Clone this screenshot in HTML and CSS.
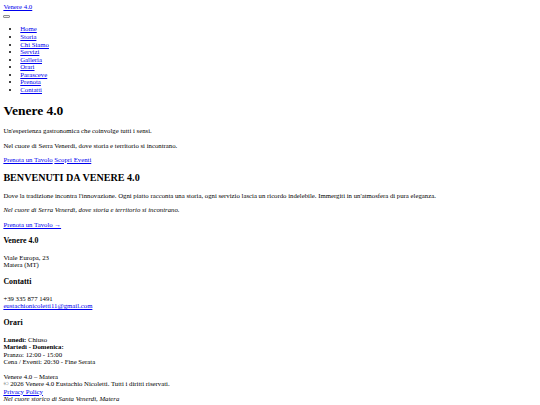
FILE: index.html
```html
<!DOCTYPE html>
<html lang="it">
<head>
<meta charset="utf-8">
<title>Venere 4.0</title>
<link rel="stylesheet" href="styles.css">
</head>
<body class="page">
<header class="site-header">
  <div class="logo-row"><a class="logo" href="#">Venere 4.0</a></div>
  <div class="toggle-row"><button class="menu-toggle" type="button" aria-label="Menu"></button></div>
  <nav class="main-nav">
    <ul class="nav-list">
      <li><a href="#">Home</a></li>
      <li><a href="#">Storia</a></li>
      <li><a href="#">Chi Siamo</a></li>
      <li><a href="#">Servizi</a></li>
      <li><a href="#">Galleria</a></li>
      <li><a href="#">Orari</a></li>
      <li><a href="#">Parasceve</a></li>
      <li><a href="#">Prenota</a></li>
      <li><a href="#">Contatti</a></li>
    </ul>
  </nav>
</header>
<main>
  <section class="hero">
    <h1 class="hero-title">Venere 4.0</h1>
    <p class="txt">Un'esperienza gastronomica che coinvolge tutti i sensi.</p>
    <p class="txt">Nel cuore di Serra Venerdì, dove storia e territorio si incontrano.</p>
    <div class="hero-actions"><a href="#">Prenota un Tavolo</a> <a href="#">Scopri Eventi</a></div>
  </section>
  <section class="welcome">
    <h2 class="welcome-title">BENVENUTI DA VENERE 4.0</h2>
    <p class="txt">Dove la tradizione incontra l'innovazione. Ogni piatto racconta una storia, ogni servizio lascia un ricordo indelebile. Immergiti in un'atmosfera di pura eleganza.</p>
    <p class="txt"><em>Nel cuore di Serra Venerdì, dove storia e territorio si incontrano.</em></p>
    <a href="#">Prenota un Tavolo →</a>
  </section>
</main>
<footer class="site-footer">
  <div class="f-col">
    <h3 class="f-title">Venere 4.0</h3>
    <p class="txt">Viale Europa, 23<br>Matera (MT)</p>
  </div>
  <div class="f-col">
    <h3 class="f-title">Contatti</h3>
    <p class="txt">+39 335 877 1491<br><a href="#">eustachionicoletti11@gmail.com</a></p>
  </div>
  <div class="f-col">
    <h3 class="f-title">Orari</h3>
    <div><strong>Lunedì:</strong> Chiuso</div>
    <div><strong>Martedì - Domenica:</strong></div>
    <div>Pranzo: 12:00 - 15:00</div>
    <div>Cena / Eventi: 20:30 - Fine Serata</div>
  </div>
  <div class="f-bottom">
    <div>Venere 4.0 – Matera</div>
    <div>© 2026 Venere 4.0 Eustachio Nicoletti. Tutti i diritti riservati.</div>
    <div><a href="#">Privacy Policy</a></div>
    <div><em>Nel cuore storico di Santa Venerdì, Matera</em></div>
  </div>
</footer>
</body>
</html>
```
FILE: styles.css
```css
html { background: #fff; }
.page {
  margin: 3.375px;
  font-family: "Liberation Serif", "Times New Roman", serif;
  font-size: 6.75px;
  line-height: 1.125;
  color: #000;
}
a { color: #0000ee; }
.menu-toggle {
  display: inline-block;
  width: 6.75px;
  height: 2.53px;
  padding: 0;
  border: 0.85px solid #8f8f8f;
  border-radius: 1px;
  background: #efefef;
  vertical-align: baseline;
}
.nav-list {
  margin: 1em 0;
  padding-left: 16.875px;
}
.hero-title { font-size: 2em; margin: 0.67em 0; line-height: 1.15; }
.welcome-title { font-size: 1.5em; margin: 0.83em 0; line-height: 1.15; }
.f-title { font-size: 1.17em; margin: 1em 0; line-height: 1.25; }
.txt { margin: 1em 0; }
.f-bottom { margin-top: 1em; }
```
